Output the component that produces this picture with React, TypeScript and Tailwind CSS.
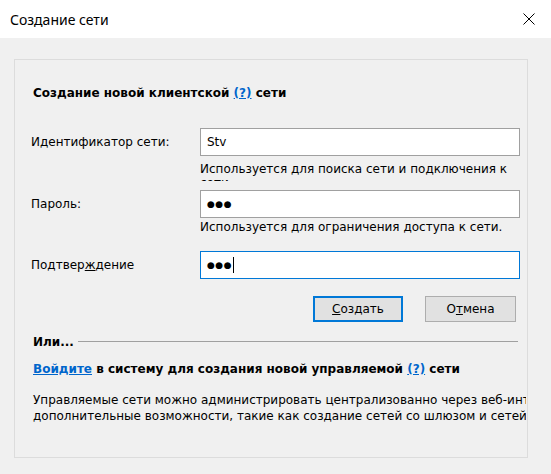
import React from "react"

function CloseIcon() {
  return (
    <svg width="12" height="12" viewBox="0 0 12 12" fill="none" stroke="#000" strokeWidth="1">
      <path d="M0.5 0.5 L11.5 11.5 M11.5 0.5 L0.5 11.5" />
    </svg>
  )
}

function Field({ value, focused, password }: { value: string; focused?: boolean; password?: boolean }) {
  return (
    <div
      className={
        "h-[28px] w-[320px] bg-white border flex items-center pl-[6px] " +
        (focused ? "border-[#0078d7]" : "border-[#a0a0a0]")
      }
    >
      {password ? <span className="text-[9px] tracking-[0.5px] leading-none">●●●</span> : <span>{value}</span>}
      {focused && <span className="ml-[1px] w-[1px] h-[16px] bg-black" />}
    </div>
  )
}

function Row({ label, children }: { label: React.ReactNode; children: React.ReactNode }) {
  return (
    <div className="flex items-center">
      <div className="w-[169px]">{label}</div>
      {children}
    </div>
  )
}

export default function App() {
  return (
    <div
      className="w-[551px] h-[474px] bg-[#f0f0f0] text-black overflow-hidden"
      style={{ fontFamily: '"DejaVu Sans", Tahoma, sans-serif' }}
    >
      <div className="h-[38px] bg-white flex items-center justify-between pl-[10px] pr-[16px]">
        <span className="text-[14px]" style={{ fontFamily: '"Noto Sans", "Open Sans", sans-serif' }}>
          Создание сети
        </span>
        <CloseIcon />
      </div>

      <div className="mt-[21px] ml-[14px] w-[514px] h-[399px] border border-[#dcdcdc] pl-[16px] pt-[25px] text-[12px]">
        <h2 className="font-bold text-[12px] leading-[16px] pl-[2px]">
          Создание новой клиентской <span className="text-[#0066cc] underline">(?)</span> сети
        </h2>

        <div className="mt-[27px]">
          <Row label="Идентификатор сети:">
            <Field value="Stv" />
          </Row>
          {/* the second line is hidden under the next field, as in the original */}
          <div className="ml-[169px] h-[25px] overflow-hidden pt-[6px] leading-[14px] w-[320px]">
            Используется для поиска сети и подключения к сети.
          </div>
          <div className="mt-[9px]">
            <Row label="Пароль:">
              <Field value="" password />
            </Row>
          </div>
          <div className="ml-[169px] h-[33px] pt-[2px] leading-[14px]">
            Используется для ограничения доступа к сети.
          </div>
          <Row
            label={
              <span>
                Подтвер<span className="underline">ж</span>дение
              </span>
            }
          >
            <Field value="" password focused />
          </Row>
        </div>

        <div className="mt-[17px] flex justify-end gap-[22px] pr-[11px]">
          <button className="w-[90px] h-[26px] bg-[#e1e1e1] border-2 border-[#0078d7] flex items-center justify-center">
            <span>
              <span className="underline">С</span>оздать
            </span>
          </button>
          <button className="w-[91px] h-[26px] bg-[#e1e1e1] border border-[#adadad] flex items-center justify-center">
            <span>
              О<span className="underline">т</span>мена
            </span>
          </button>
        </div>

        <div className="mt-[11px] flex items-center pl-[2px] pr-[9px]">
          <span className="font-bold">Или...</span>
          <div className="flex-1 ml-[4px] h-[2px] border-t border-[#a0a0a0] border-b-white" />
        </div>

        <div className="mt-[10px] font-bold pl-[2px] leading-[16px]">
          <span className="text-[#0066cc] underline">Войдите</span> в систему для создания новой управляемой{" "}
          <span className="text-[#0066cc] underline">(?)</span> сети
        </div>

        <div className="mt-[15px] pl-[2px] w-[495px] overflow-hidden leading-[16px] whitespace-nowrap">
          <div>Управляемые сети можно администрировать централизованно через веб-интерфейс и использовать</div>
          <div>дополнительные возможности, такие как создание сетей со шлюзом и сетей с концентратором.</div>
        </div>
      </div>
    </div>
  )
}
